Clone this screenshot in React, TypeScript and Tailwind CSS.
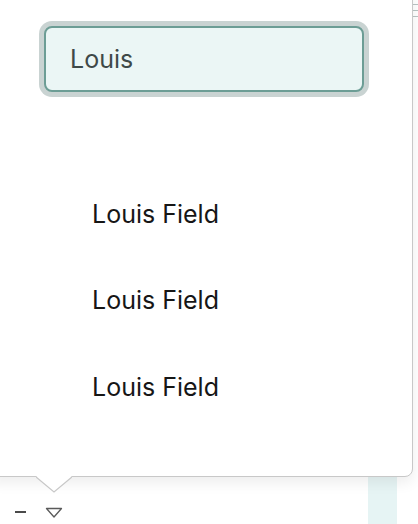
import React from "react";

export default function App() {
  const names = ["Louis Field", "Louis Field", "Louis Field"];
  return (
    <div
      className="relative w-[418px] h-[524px] overflow-hidden bg-white"
      style={{ fontFamily: "Inter, 'Noto Sans', sans-serif" }}
    >
      {/* background page */}
      <div className="flex h-full">
        <div className="flex flex-1 items-end gap-[19px] pb-[5px] pl-[15px]">
          <div className="mb-[6px] h-[2px] w-[11px] bg-[#4a4a4a]" />
          <svg width="18" height="12" viewBox="0 0 18 12" className="mb-0">
            <polygon points="1.5,1.5 16.5,1.5 9,10" fill="none" stroke="#5a5a5a" strokeWidth="1.3" strokeLinejoin="round" />
          </svg>
        </div>
        <div className="mr-[21px] w-[29px] bg-[#e6f4f4]" />
      </div>

      {/* right-side table edge marks */}
      <div className="absolute right-0 top-0 flex w-[5px] flex-col gap-[5px] pt-[4px]">
        <div className="h-px bg-[#b9c4c3]" />
        <div className="h-px bg-[#b9c4c3]" />
        <div className="h-px bg-[#b9c4c3]" />
      </div>

      {/* popup */}
      <div className="absolute left-[-10px] top-[-10px] h-[487px] w-[423px] rounded-br-[8px] border border-[#c8c8c8] bg-white shadow-[0_6px_14px_rgba(0,0,0,0.07)]">
        <div className="ml-[53px] mt-[35px] flex h-[66px] w-[320px] items-center rounded-[8px] border-2 border-[#6c9d95] bg-[#ebf6f5] pl-[24px] pt-[2px] text-[25px] text-[#3e4948] shadow-[0_0_0_5px_#c9d3d2]">
          Louis
        </div>
        <div className="mt-[79px] flex flex-col">
          {names.map((n, i) => (
            <div key={i} className="flex h-[86.5px] items-center pl-[101px] text-[25px] text-[#161616]">
              {n}
            </div>
          ))}
        </div>
        {/* notch */}
        <svg
          width="36"
          height="18"
          viewBox="0 0 36 18"
          className="absolute left-[45px] top-[485px]"
        >
          <polygon points="0,0 18,16 36,0" fill="#ffffff" />
          <polyline points="0,1 18,16 36,1" fill="none" stroke="#c8c8c8" strokeWidth="1.2" />
        </svg>
      </div>
    </div>
  );
}
